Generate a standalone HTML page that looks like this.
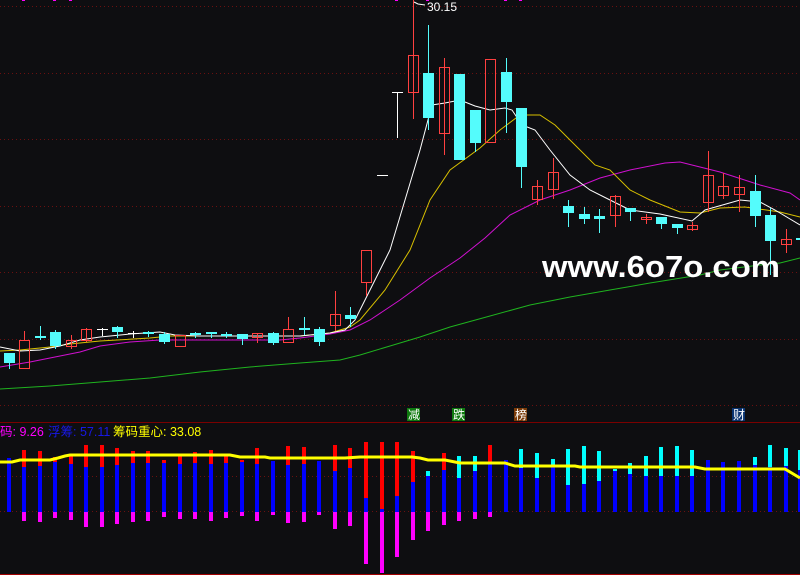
<!DOCTYPE html>
<html><head><meta charset="utf-8"><style>
html,body{margin:0;padding:0;background:#0e0e11;width:800px;height:575px;overflow:hidden}
svg{display:block}
text{font-family:"Liberation Sans","Noto Sans CJK SC",sans-serif}
</style></head><body>
<svg width="800" height="575" viewBox="0 0 800 575" xmlns="http://www.w3.org/2000/svg" shape-rendering="crispEdges">
<rect width="800" height="575" fill="#0e0e11"/>
<g stroke="#6a1010" stroke-width="1" stroke-dasharray="1,3">
<line x1="0" y1="6.5" x2="800" y2="6.5"/>
<line x1="0" y1="73.5" x2="800" y2="73.5"/>
<line x1="0" y1="139.5" x2="800" y2="139.5"/>
<line x1="0" y1="206.5" x2="800" y2="206.5"/>
<line x1="0" y1="272.5" x2="800" y2="272.5"/>
<line x1="0" y1="339.5" x2="800" y2="339.5"/>
<line x1="0" y1="405.5" x2="800" y2="405.5"/>
<line x1="0" y1="476.5" x2="800" y2="476.5"/>
<line x1="0" y1="511.5" x2="800" y2="511.5"/>
</g>
<line x1="0" y1="422.5" x2="800" y2="422.5" stroke="#7a0000"/>
<line x1="0" y1="574.5" x2="800" y2="574.5" stroke="#a00000"/>
<g fill="#ff00ff"><rect x="22" y="0" width="3" height="1"/><rect x="53" y="0" width="3" height="1"/><rect x="69" y="0" width="3" height="1"/><rect x="395" y="0" width="3" height="1"/><rect x="426" y="0" width="3" height="1"/><rect x="504" y="0" width="3" height="1"/><rect x="519" y="0" width="3" height="1"/></g>

<g fill="none" stroke-width="1" shape-rendering="auto">
<polyline stroke="#1fb31f" points="0,389 50,386 100,382 150,378 200,372 250,367 300,363 340,360 360,355 390,346 420,337 450,327 490,316 530,305 570,297 610,290 650,283 700,275 720,270 760,265 780,263 800,258"/>
<polyline stroke="#d010d0" points="0,367 30,362 50,358 80,352 100,346 130,342 160,340 280,340 300,338 330,334 350,330 370,320 400,300 430,278 460,258 485,238 510,215 540,200 570,190 600,178 630,170 665,163 680,162 700,167 720,172 760,185 790,193 800,200"/>
<polyline stroke="#d8c000" points="0,351 20,350 50,347 70,344 100,341 150,338 170,336 300,336 330,333 350,327 360,320 385,290 410,250 430,200 450,170 480,148 500,130 520,115 540,115 555,125 575,145 595,165 610,170 630,190 650,200 680,212 700,213 720,208 745,207 780,212 800,217"/>
<polyline stroke="#ffffff" points="0,347 20,351 40,350 60,346 80,340 100,337 130,334 160,332 175,335 200,336 300,336 330,333 345,330 355,320 365,300 390,250 405,200 420,150 432,105 445,103 460,100 475,106 490,110 505,108 512,110 522,125 535,130 550,150 570,175 590,190 610,200 630,210 660,214 692,221 705,210 740,200 760,202 775,210 800,225"/>
</g>

<g stroke-width="1">
<g stroke="#54fcfc">
<line x1="9.5" y1="353" x2="9.5" y2="369"/><line x1="40.5" y1="326" x2="40.5" y2="340"/><line x1="55.5" y1="330" x2="55.5" y2="349"/><line x1="117.5" y1="326" x2="117.5" y2="338"/><line x1="148.5" y1="331" x2="148.5" y2="337"/><line x1="164.5" y1="332" x2="164.5" y2="344"/><line x1="195.5" y1="332" x2="195.5" y2="338"/><line x1="211.5" y1="332" x2="211.5" y2="338"/><line x1="226.5" y1="332" x2="226.5" y2="338"/><line x1="242.5" y1="334" x2="242.5" y2="345"/><line x1="273.5" y1="332" x2="273.5" y2="345"/><line x1="304.5" y1="317" x2="304.5" y2="335"/><line x1="319.5" y1="327" x2="319.5" y2="346"/><line x1="350.5" y1="307" x2="350.5" y2="327"/>
<line x1="428.5" y1="25" x2="428.5" y2="130"/><line x1="475.5" y1="110" x2="475.5" y2="152"/><line x1="506.5" y1="58" x2="506.5" y2="133"/><line x1="521.5" y1="108" x2="521.5" y2="188"/><line x1="568.5" y1="200" x2="568.5" y2="227"/><line x1="584.5" y1="207" x2="584.5" y2="224"/><line x1="599.5" y1="209" x2="599.5" y2="233"/><line x1="630.5" y1="208" x2="630.5" y2="221"/><line x1="661.5" y1="217" x2="661.5" y2="229"/><line x1="677.5" y1="224" x2="677.5" y2="234"/><line x1="755.5" y1="175" x2="755.5" y2="227"/><line x1="770.5" y1="208" x2="770.5" y2="275"/>
</g>
<g stroke="#ff4040">
<line x1="24.5" y1="331" x2="24.5" y2="340"/><line x1="71.5" y1="335" x2="71.5" y2="349"/><line x1="86.5" y1="328" x2="86.5" y2="342"/><line x1="257.5" y1="333" x2="257.5" y2="343"/><line x1="288.5" y1="317" x2="288.5" y2="329"/><line x1="335.5" y1="291" x2="335.5" y2="331"/><line x1="366.5" y1="283" x2="366.5" y2="296"/>
<line x1="413.5" y1="0" x2="413.5" y2="119"/><line x1="444.5" y1="58" x2="444.5" y2="155"/><line x1="537.5" y1="180" x2="537.5" y2="205"/><line x1="553.5" y1="158" x2="553.5" y2="199"/><line x1="615.5" y1="195" x2="615.5" y2="227"/><line x1="646.5" y1="214" x2="646.5" y2="224"/><line x1="692.5" y1="222" x2="692.5" y2="231"/><line x1="708.5" y1="151" x2="708.5" y2="212"/><line x1="723.5" y1="173" x2="723.5" y2="199"/><line x1="739.5" y1="175" x2="739.5" y2="212"/><line x1="786.5" y1="229" x2="786.5" y2="253"/>
</g>
<g stroke="#ffffff">
<line x1="102.5" y1="328" x2="102.5" y2="336"/><line x1="97" y1="329.5" x2="108" y2="329.5"/>
<line x1="133.5" y1="331" x2="133.5" y2="338"/><line x1="128" y1="333.5" x2="139" y2="333.5"/>
<line x1="377" y1="175.5" x2="388" y2="175.5"/>
<line x1="397.5" y1="92" x2="397.5" y2="138"/><line x1="392" y1="92.5" x2="403" y2="92.5"/>
</g>
<g fill="#54fcfc">
<rect x="4" y="353" width="11" height="10"/><rect x="35" y="336" width="11" height="2"/><rect x="50" y="332" width="11" height="14"/><rect x="112" y="327" width="11" height="5"/><rect x="143" y="332" width="11" height="2"/><rect x="159" y="334" width="11" height="8"/><rect x="190" y="333" width="11" height="2"/><rect x="206" y="332" width="11" height="2"/><rect x="221" y="334" width="11" height="2"/><rect x="237" y="334" width="11" height="5"/><rect x="268" y="333" width="11" height="10"/><rect x="299" y="328" width="11" height="2"/><rect x="314" y="329" width="11" height="13"/><rect x="345" y="315" width="11" height="4"/>
<rect x="423" y="73" width="11" height="45"/><rect x="454" y="74" width="11" height="86"/><rect x="470" y="110" width="11" height="33"/><rect x="501" y="72" width="11" height="30"/><rect x="516" y="108" width="11" height="59"/><rect x="563" y="206" width="11" height="7"/><rect x="579" y="214" width="11" height="5"/><rect x="594" y="216" width="11" height="3"/><rect x="625" y="208" width="11" height="4"/><rect x="656" y="217" width="11" height="7"/><rect x="672" y="224" width="11" height="4"/><rect x="750" y="191" width="11" height="25"/><rect x="765" y="215" width="11" height="26"/><rect x="796" y="238" width="4" height="2"/>
</g>
<g fill="none" stroke="#ff4040">
<rect x="19.5" y="340.5" width="10" height="28"/><rect x="66.5" y="340.5" width="10" height="6"/><rect x="81.5" y="329.5" width="10" height="11"/><rect x="175.5" y="335.5" width="10" height="11"/><rect x="252.5" y="333.5" width="10" height="4"/><rect x="283.5" y="329.5" width="10" height="13"/><rect x="330.5" y="314.5" width="10" height="11"/><rect x="361.5" y="250.5" width="10" height="32"/>
<rect x="408.5" y="55.5" width="10" height="37"/><rect x="439.5" y="67.5" width="10" height="66"/><rect x="485.5" y="59.5" width="10" height="83"/><rect x="532.5" y="186.5" width="10" height="13"/><rect x="548.5" y="172.5" width="10" height="17"/><rect x="610.5" y="196.5" width="10" height="19"/><rect x="641.5" y="217.5" width="10" height="2"/><rect x="687.5" y="225.5" width="10" height="4"/><rect x="703.5" y="175.5" width="10" height="27"/><rect x="718.5" y="186.5" width="10" height="9"/><rect x="734.5" y="187.5" width="10" height="7"/><rect x="781.5" y="239.5" width="10" height="5"/>
</g>
</g>
<polyline points="414,2 418,4 425,5" fill="none" stroke="#fff" shape-rendering="auto"/>
<text x="427" y="11" font-size="12" fill="#ffffff">30.15</text>

<text x="542" y="277" font-size="31" font-weight="bold" fill="#ffffff" textLength="238" lengthAdjust="spacingAndGlyphs">www.6o7o.com</text>

<rect x="407" y="408" width="13" height="13" fill="#0f7a0f"/><text x="408" y="419" font-size="12" fill="#fff">减</text>
<rect x="452" y="408" width="13" height="13" fill="#0f7a0f"/><text x="453" y="419" font-size="12" fill="#fff">跌</text>
<rect x="514" y="408" width="13" height="13" fill="#7a3a08"/><text x="515" y="419" font-size="12" fill="#fff">榜</text>
<rect x="732" y="408" width="13" height="13" fill="#0a3370"/><text x="733" y="419" font-size="12" fill="#fff">财</text>

<text x="0" y="436" font-size="12.5" fill="#ff00ff">码: 9.26</text>
<text x="48" y="436" font-size="12.5" fill="#1818e8">浮筹: 57.11</text>
<text x="113" y="436" font-size="12.5" fill="#ffff00">筹码重心: 33.08</text>

<g fill="#0000ff">
<rect x="7" y="458" width="4" height="54"/><rect x="22" y="467" width="4" height="45"/><rect x="38" y="466" width="4" height="46"/><rect x="53" y="462" width="4" height="50"/><rect x="69" y="464" width="4" height="48"/><rect x="84" y="467" width="4" height="45"/><rect x="100" y="467" width="4" height="45"/><rect x="115" y="465" width="4" height="47"/><rect x="131" y="463" width="4" height="49"/><rect x="146" y="463" width="4" height="49"/><rect x="162" y="463" width="4" height="49"/><rect x="178" y="464" width="4" height="48"/><rect x="193" y="463" width="4" height="49"/><rect x="209" y="464" width="4" height="48"/><rect x="224" y="463" width="4" height="49"/><rect x="240" y="462" width="4" height="50"/><rect x="255" y="464" width="4" height="48"/><rect x="271" y="461" width="4" height="51"/><rect x="286" y="465" width="4" height="47"/><rect x="302" y="464" width="4" height="48"/><rect x="317" y="461" width="4" height="51"/><rect x="333" y="471" width="4" height="41"/><rect x="348" y="468" width="4" height="44"/><rect x="364" y="498" width="4" height="14"/><rect x="380" y="509" width="4" height="3"/><rect x="395" y="496" width="4" height="16"/>
<rect x="411" y="482" width="4" height="30"/><rect x="426" y="476" width="4" height="36"/><rect x="442" y="470" width="4" height="42"/><rect x="457" y="478" width="4" height="34"/><rect x="473" y="471" width="4" height="41"/><rect x="488" y="462" width="4" height="50"/><rect x="504" y="460" width="4" height="52"/><rect x="519" y="468" width="4" height="44"/><rect x="535" y="478" width="4" height="34"/><rect x="551" y="467" width="4" height="45"/><rect x="566" y="485" width="4" height="27"/><rect x="582" y="484" width="4" height="28"/><rect x="597" y="481" width="4" height="31"/><rect x="613" y="471" width="4" height="41"/><rect x="628" y="474" width="4" height="38"/><rect x="644" y="476" width="4" height="36"/><rect x="659" y="476" width="4" height="36"/><rect x="675" y="476" width="4" height="36"/><rect x="690" y="476" width="4" height="36"/><rect x="706" y="460" width="4" height="52"/><rect x="721" y="462" width="4" height="50"/><rect x="737" y="461" width="4" height="51"/><rect x="753" y="465" width="4" height="47"/><rect x="768" y="467" width="4" height="45"/><rect x="784" y="466" width="4" height="46"/><rect x="798" y="470" width="2" height="42"/>
</g>
<g fill="#ff0000">
<rect x="22" y="450" width="4" height="17"/><rect x="38" y="451" width="4" height="15"/><rect x="53" y="457" width="4" height="5"/><rect x="69" y="455" width="4" height="9"/><rect x="84" y="445" width="4" height="22"/><rect x="100" y="445" width="4" height="22"/><rect x="115" y="448" width="4" height="17"/><rect x="131" y="451" width="4" height="12"/><rect x="146" y="451" width="4" height="12"/><rect x="162" y="460" width="4" height="3"/><rect x="178" y="455" width="4" height="9"/><rect x="193" y="452" width="4" height="11"/><rect x="209" y="450" width="4" height="14"/><rect x="224" y="455" width="4" height="8"/><rect x="240" y="460" width="4" height="2"/><rect x="255" y="448" width="4" height="16"/><rect x="286" y="446" width="4" height="19"/><rect x="302" y="447" width="4" height="17"/><rect x="333" y="445" width="4" height="26"/><rect x="348" y="448" width="4" height="20"/><rect x="364" y="442" width="4" height="56"/><rect x="380" y="442" width="4" height="67"/><rect x="395" y="442" width="4" height="54"/>
<rect x="411" y="451" width="4" height="31"/><rect x="442" y="453" width="4" height="17"/><rect x="488" y="445" width="4" height="17"/>
</g>
<g fill="#00ffff">
<rect x="426" y="471" width="4" height="5"/><rect x="457" y="456" width="4" height="22"/><rect x="473" y="456" width="4" height="15"/><rect x="519" y="449" width="4" height="19"/><rect x="535" y="453" width="4" height="25"/><rect x="551" y="459" width="4" height="8"/><rect x="566" y="449" width="4" height="36"/><rect x="582" y="446" width="4" height="38"/><rect x="597" y="451" width="4" height="30"/><rect x="613" y="469" width="4" height="2"/><rect x="628" y="463" width="4" height="11"/><rect x="644" y="456" width="4" height="20"/><rect x="659" y="447" width="4" height="29"/><rect x="675" y="446" width="4" height="30"/><rect x="690" y="450" width="4" height="26"/><rect x="753" y="457" width="4" height="8"/><rect x="768" y="445" width="4" height="22"/><rect x="784" y="448" width="4" height="18"/><rect x="798" y="450" width="2" height="20"/>
</g>
<g fill="#ff00ff">
<rect x="22" y="512" width="4" height="9"/><rect x="38" y="512" width="4" height="10"/><rect x="53" y="512" width="4" height="6"/><rect x="69" y="512" width="4" height="8"/><rect x="84" y="512" width="4" height="15"/><rect x="100" y="512" width="4" height="15"/><rect x="115" y="512" width="4" height="12"/><rect x="131" y="512" width="4" height="10"/><rect x="146" y="512" width="4" height="9"/><rect x="162" y="512" width="4" height="5"/><rect x="178" y="512" width="4" height="7"/><rect x="193" y="512" width="4" height="7"/><rect x="209" y="512" width="4" height="9"/><rect x="224" y="512" width="4" height="6"/><rect x="240" y="512" width="4" height="4"/><rect x="255" y="512" width="4" height="9"/><rect x="271" y="512" width="4" height="3"/><rect x="286" y="512" width="4" height="11"/><rect x="302" y="512" width="4" height="10"/><rect x="317" y="512" width="4" height="3"/><rect x="333" y="512" width="4" height="17"/><rect x="348" y="512" width="4" height="14"/><rect x="364" y="512" width="4" height="52"/><rect x="380" y="512" width="4" height="61"/><rect x="395" y="512" width="4" height="45"/>
<rect x="411" y="512" width="4" height="28"/><rect x="426" y="512" width="4" height="19"/><rect x="442" y="512" width="4" height="13"/><rect x="457" y="512" width="4" height="9"/><rect x="473" y="512" width="4" height="7"/><rect x="488" y="512" width="4" height="5"/>
</g>
<polyline fill="none" stroke="#ffff00" stroke-width="3" shape-rendering="auto" points="0,462 12,462 20,460 50,460 58,458 65,456 70,455 230,455 240,457 265,457 270,458 345,458 360,457 412,457 420,458 428,460 445,460 460,463 505,463 515,466 575,466 580,467 695,467 705,469 785,469 795,475 800,478"/>
</svg>
</body></html>
